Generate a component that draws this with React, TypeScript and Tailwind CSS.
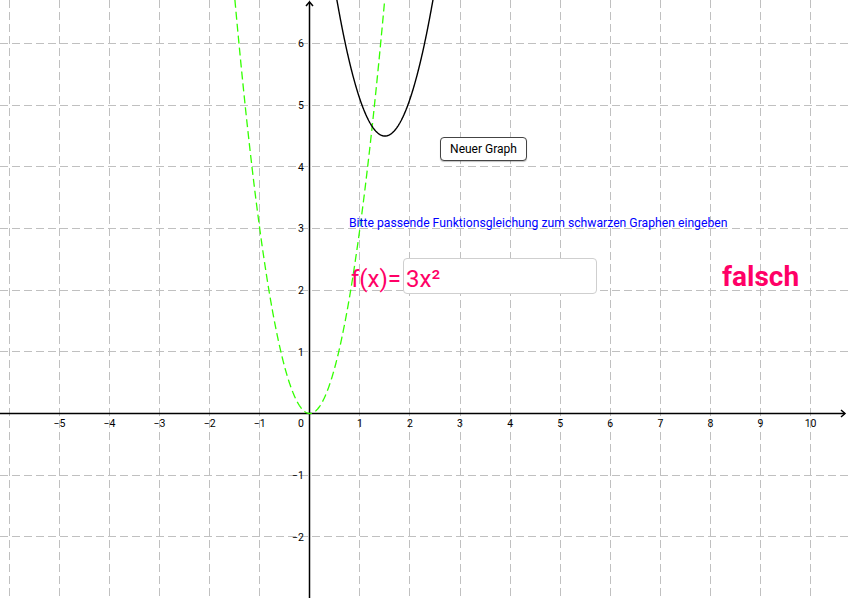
import React from "react";

// coordinate system of the drawing pad
const OX = 309.8;
const OY = 413.5;
const UX = 50.08;
const UY = 61.65;
const W = 850;
const H = 598;

const px = (x: number) => OX + x * UX;
const py = (y: number) => OY - y * UY;
const crisp = (v: number) => Math.round(v - 0.5) + 0.5;

function curve(f: (x: number) => number, x0: number, x1: number) {
  const pts: string[] = [];
  const steps = 400;
  for (let i = 0; i <= steps; i++) {
    const x = x0 + ((x1 - x0) * i) / steps;
    pts.push(`${px(x).toFixed(2)},${py(f(x)).toFixed(2)}`);
  }
  return "M" + pts.join(" L");
}

const xTicks = [-6, -5, -4, -3, -2, -1, 1, 2, 3, 4, 5, 6, 7, 8, 9, 10];
const yTicks = [-2, -1, 1, 2, 3, 4, 5, 6];
const minus = (n: number) => (n < 0 ? `\u2212${-n}` : `${n}`);

function Graph() {
  const black = curve((x) => 2.4 * (x - 1.5) ** 2 + 4.5, 0.4, 2.6);
  const green = curve((x) => 3 * x * x, -1.6, 1.6);
  const axisX = crisp(OX);
  const axisY = crisp(OY);

  return (
    <svg width={W} height={H} className="block" style={{ fontFamily: "Roboto, sans-serif" }}>
      {/* grid */}
      <g stroke="#c0c0c0" strokeWidth={1} strokeDasharray="8 4">
        {[...xTicks, 0].map((k) => (
          <line key={"v" + k} x1={crisp(px(k))} x2={crisp(px(k))} y1={0} y2={H} />
        ))}
        {yTicks.map((k) => (
          <line key={"h" + k} x1={0} x2={W} y1={crisp(py(k))} y2={crisp(py(k))} />
        ))}
      </g>

      {/* axes */}
      <g stroke="#000" strokeWidth={1.5} fill="none">
        <line x1={0} x2={845} y1={axisY} y2={axisY} />
        <polyline points={`841,${axisY - 3.5} 845,${axisY} 841,${axisY + 3.5}`} />
        <line x1={axisX} x2={axisX} y1={2} y2={H} />
        <polyline points={`${axisX - 3.5},6 ${axisX},2 ${axisX + 3.5},6`} />
      </g>

      {/* tick labels */}
      <g fontSize={10.5} fill="#000">
        {xTicks
          .filter((k) => k !== -6)
          .map((k) => (
            <text key={"lx" + k} x={px(k)} y={427.3} textAnchor="middle">
              {minus(k)}
            </text>
          ))}
        <text x={304} y={427.3} textAnchor="end">
          0
        </text>
        {yTicks.map((k) => (
          <text key={"ly" + k} x={304} y={py(k) + 3.7} textAnchor="end">
            {minus(k)}
          </text>
        ))}
      </g>

      {/* functions */}
      <path d={green} stroke="#33ff00" strokeWidth={1.3} strokeDasharray="8 4" fill="none" />
      <path d={black} stroke="#000" strokeWidth={1.4} fill="none" />
    </svg>
  );
}

export default function App() {
  return (
    <div className="relative w-[850px] h-[600px] bg-white overflow-hidden font-['Roboto',sans-serif]">
      <Graph />

      <button className="absolute left-[440px] top-[137px] w-[87px] h-[24px] flex items-center justify-center rounded-[4px] border-[1.5px] border-[#444] bg-white text-[12px] leading-none text-black shadow-[0_1px_1px_rgba(0,0,0,0.25)]">
        Neuer Graph
      </button>

      <div className="absolute left-[349px] top-[217px] text-[12.2px] leading-none text-[#0000ff] whitespace-nowrap">
        Bitte passende Funktionsgleichung zum schwarzen Graphen eingeben
      </div>

      <div className="absolute left-[351px] top-[258px] flex items-center gap-[2px] text-[#ff0066]">
        <span className="text-[24px] leading-none pt-[6px]">f(x)=</span>
        <div className="w-[194px] h-[36px] rounded-[4px] border border-[#cfcfcf] bg-white flex items-center pl-[2px] pt-[6px] text-[24px] leading-none">
          3x²
        </div>
      </div>

      <div className="absolute left-[722px] top-[263px] text-[28px] font-bold leading-none text-[#ff0066]">
        falsch
      </div>
    </div>
  );
}
